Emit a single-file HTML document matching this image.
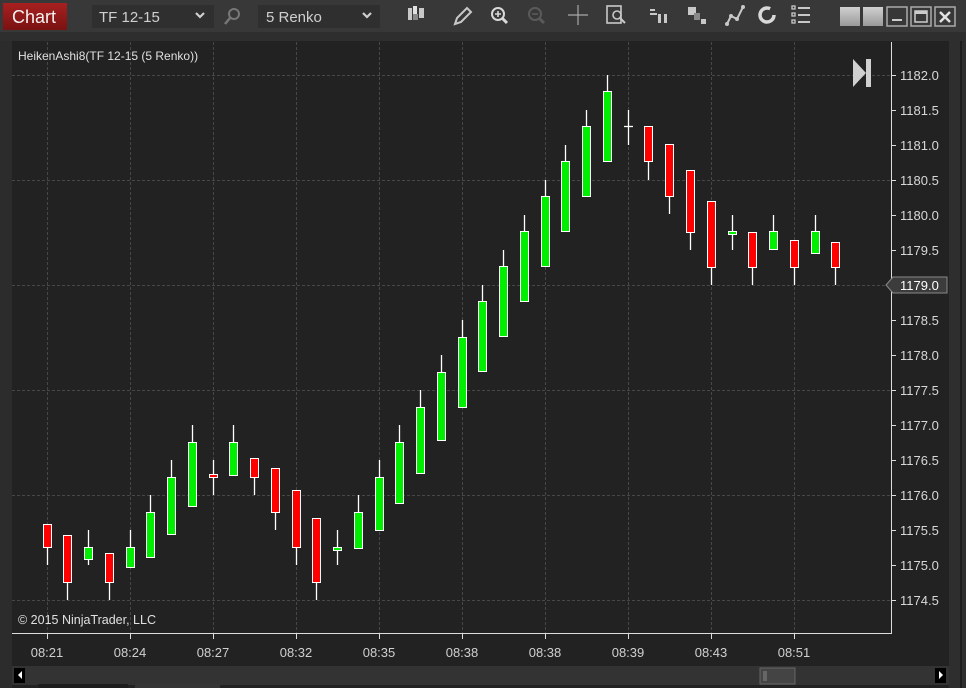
<!DOCTYPE html>
<html><head><meta charset="utf-8"><style>
html,body{margin:0;padding:0;width:966px;height:688px;overflow:hidden;background:#2c2c2c;font-family:"Liberation Sans",sans-serif}
</style></head><body>
<svg width="966" height="688" viewBox="0 0 966 688" xmlns="http://www.w3.org/2000/svg" style="position:absolute;left:0;top:0;font-family:'Liberation Sans',sans-serif">
<defs>
<linearGradient id="rb" x1="0" y1="0" x2="0" y2="1"><stop offset="0" stop-color="#a82020"/><stop offset="1" stop-color="#7a1212"/></linearGradient>
<linearGradient id="gb" x1="0" y1="0" x2="0" y2="1"><stop offset="0" stop-color="#d0d0d0"/><stop offset="1" stop-color="#9a9a9a"/></linearGradient>
</defs>
<rect x="0" y="0" width="966" height="32" fill="#383838"/>
<rect x="0" y="32" width="966" height="9" fill="#2e2e2e"/>
<rect x="3" y="3" width="64" height="27" fill="url(#rb)"/>
<text x="12" y="23" font-size="18" fill="#f2f2f2">Chart</text>
<rect x="92" y="5" width="122" height="23" fill="#2f2f2f"/>
<text x="99" y="22" font-size="15" fill="#cfcfcf">TF 12-15</text>
<path d="M196 13l4 4 4-4" stroke="#cfcfcf" stroke-width="2.2" fill="none"/>
<circle cx="234" cy="14" r="5" stroke="#777" stroke-width="2" fill="none"/><path d="M230 18l-5 6" stroke="#777" stroke-width="2.5"/>
<rect x="258" y="5" width="122" height="23" fill="#2f2f2f"/>
<text x="266" y="22" font-size="15" fill="#cfcfcf">5 Renko</text>
<path d="M363 13l4 4 4-4" stroke="#cfcfcf" stroke-width="2.2" fill="none"/>
<g fill="#c8c8c8" stroke="none">
<rect x="408" y="8" width="4" height="12"/><rect x="413" y="6" width="4" height="14" fill="#e0e0e0"/><rect x="419" y="8" width="5" height="10"/><rect x="413" y="14" width="5" height="6" fill="#888"/>
</g>
<path d="M455 24l2-6 10-10 4 4-10 10z" stroke="#c8c8c8" stroke-width="2" fill="none"/>
<circle cx="498" cy="14" r="6" stroke="#d8d8d8" stroke-width="2" fill="none"/><path d="M495 14h6M498 11v6" stroke="#d8d8d8" stroke-width="1.6"/><path d="M502 18l5 5" stroke="#d8d8d8" stroke-width="3"/>
<circle cx="535" cy="14" r="6" stroke="#5a5a5a" stroke-width="2" fill="none"/><path d="M532 14h6" stroke="#5a5a5a" stroke-width="1.6"/><path d="M539 18l5 5" stroke="#5a5a5a" stroke-width="3"/>
<path d="M568 15h20M578 5v20" stroke="#a8a8a8" stroke-width="1.2"/>
<rect x="607" y="6" width="14" height="17" fill="none" stroke="#c8c8c8" stroke-width="1.6"/><circle cx="617" cy="15" r="4" stroke="#c8c8c8" stroke-width="1.6" fill="none"/><path d="M620 18l5 5" stroke="#c8c8c8" stroke-width="2"/>
<g fill="#c8c8c8"><rect x="650" y="9" width="5" height="2"/><rect x="650" y="13" width="7" height="2"/><rect x="658" y="14" width="3" height="9"/><rect x="664" y="14" width="3" height="9"/></g>
<g fill="#c8c8c8"><rect x="688" y="7" width="8" height="8"/><rect x="694" y="13" width="6" height="7" fill="#888"/><rect x="701" y="19" width="5" height="5"/></g>
<path d="M727 24l4-8 6 3 6-12" stroke="#c8c8c8" stroke-width="2" fill="none"/><g fill="#c8c8c8"><circle cx="727" cy="24" r="2"/><circle cx="731" cy="16" r="2"/><circle cx="737" cy="19" r="2"/><circle cx="743" cy="7" r="2"/></g>
<circle cx="767" cy="15" r="7" stroke="#d8d8d8" stroke-width="3.5" fill="none" stroke-dasharray="36 8"/>
<g fill="none" stroke="#c8c8c8" stroke-width="1.3"><rect x="792" y="6" width="3" height="3"/><rect x="792" y="13" width="3" height="3"/><rect x="792" y="20" width="3" height="3"/></g><g fill="#c8c8c8"><rect x="798" y="7" width="12" height="2"/><rect x="798" y="14" width="12" height="2"/><rect x="798" y="21" width="12" height="2"/></g>
<rect x="840" y="7" width="20" height="19" fill="url(#gb)"/><rect x="863" y="7" width="20" height="19" fill="url(#gb)"/>
<rect x="887" y="7" width="20" height="19" fill="none" stroke="#aaa" stroke-width="1.5"/><rect x="892" y="19" width="10" height="2" fill="#ccc"/>
<rect x="911" y="7" width="20" height="19" fill="none" stroke="#aaa" stroke-width="1.5"/><rect x="915" y="11" width="12" height="11" fill="none" stroke="#ccc" stroke-width="1.5"/><rect x="915" y="11" width="12" height="3" fill="#ccc"/>
<rect x="935" y="7" width="20" height="19" fill="none" stroke="#aaa" stroke-width="1.5"/><path d="M940 12l10 10M950 12l-10 10" stroke="#e0e0e0" stroke-width="2.5"/>
<rect x="12" y="41" width="937" height="647" fill="#222"/>
<rect x="949" y="41" width="17" height="647" fill="#2e2e2e"/>
<rect x="960" y="41" width="2" height="647" fill="#1e1e1e"/>
<g stroke="#474747" stroke-width="1" stroke-dasharray="3 2">
<line x1="12" y1="75.5" x2="891" y2="75.5"/><line x1="12" y1="180.5" x2="891" y2="180.5"/><line x1="12" y1="285.5" x2="891" y2="285.5"/><line x1="12" y1="390.5" x2="891" y2="390.5"/><line x1="12" y1="495.5" x2="891" y2="495.5"/><line x1="12" y1="600.5" x2="891" y2="600.5"/>
<line x1="47.5" y1="42" x2="47.5" y2="633"/><line x1="130.5" y1="42" x2="130.5" y2="633"/><line x1="213.5" y1="42" x2="213.5" y2="633"/><line x1="296.5" y1="42" x2="296.5" y2="633"/><line x1="379.5" y1="42" x2="379.5" y2="633"/><line x1="462.5" y1="42" x2="462.5" y2="633"/><line x1="545.5" y1="42" x2="545.5" y2="633"/><line x1="628.5" y1="42" x2="628.5" y2="633"/><line x1="711.5" y1="42" x2="711.5" y2="633"/><line x1="794.5" y1="42" x2="794.5" y2="633"/>
</g>
<line x1="891.5" y1="42" x2="891.5" y2="634" stroke="#ddd"/>
<line x1="12" y1="633.5" x2="892" y2="633.5" stroke="#ddd"/>
<g stroke="#ddd"><line x1="891" y1="75.5" x2="896" y2="75.5"/><line x1="891" y1="110.5" x2="896" y2="110.5"/><line x1="891" y1="145.5" x2="896" y2="145.5"/><line x1="891" y1="180.5" x2="896" y2="180.5"/><line x1="891" y1="215.5" x2="896" y2="215.5"/><line x1="891" y1="250.5" x2="896" y2="250.5"/><line x1="891" y1="320.5" x2="896" y2="320.5"/><line x1="891" y1="355.5" x2="896" y2="355.5"/><line x1="891" y1="390.5" x2="896" y2="390.5"/><line x1="891" y1="425.5" x2="896" y2="425.5"/><line x1="891" y1="460.5" x2="896" y2="460.5"/><line x1="891" y1="495.5" x2="896" y2="495.5"/><line x1="891" y1="530.5" x2="896" y2="530.5"/><line x1="891" y1="565.5" x2="896" y2="565.5"/><line x1="891" y1="600.5" x2="896" y2="600.5"/>
<line x1="47.5" y1="633" x2="47.5" y2="639"/><line x1="130.5" y1="633" x2="130.5" y2="639"/><line x1="213.5" y1="633" x2="213.5" y2="639"/><line x1="296.5" y1="633" x2="296.5" y2="639"/><line x1="379.5" y1="633" x2="379.5" y2="639"/><line x1="462.5" y1="633" x2="462.5" y2="639"/><line x1="545.5" y1="633" x2="545.5" y2="639"/><line x1="628.5" y1="633" x2="628.5" y2="639"/><line x1="711.5" y1="633" x2="711.5" y2="639"/><line x1="794.5" y1="633" x2="794.5" y2="639"/></g>
<g font-size="13" fill="#d8d8d8">
<text x="900" y="80">1182.0</text><text x="900" y="115">1181.5</text><text x="900" y="150">1181.0</text><text x="900" y="185">1180.5</text><text x="900" y="220">1180.0</text><text x="900" y="255">1179.5</text><text x="900" y="325">1178.5</text><text x="900" y="360">1178.0</text><text x="900" y="395">1177.5</text><text x="900" y="430">1177.0</text><text x="900" y="465">1176.5</text><text x="900" y="500">1176.0</text><text x="900" y="535">1175.5</text><text x="900" y="570">1175.0</text><text x="900" y="605">1174.5</text>
</g>
<path d="M886 285l7-8h54v16h-54z" fill="#3c3c3c" stroke="#888"/>
<text x="900" y="290" font-size="13" fill="#fff">1179.0</text>
<g font-size="13" fill="#d0d0d0" text-anchor="middle">
<text x="47" y="657">08:21</text><text x="130" y="657">08:24</text><text x="213" y="657">08:27</text><text x="296" y="657">08:32</text><text x="379" y="657">08:35</text><text x="462" y="657">08:38</text><text x="545" y="657">08:38</text><text x="628" y="657">08:39</text><text x="711" y="657">08:43</text><text x="794" y="657">08:51</text>
</g>
<text x="18" y="60" font-size="12" fill="#e0e0e0">HeikenAshi8(TF 12-15 (5 Renko))</text>
<text x="18" y="624" font-size="12.5" fill="#e0e0e0">© 2015 NinjaTrader, LLC</text>
<path d="M853 59l13 14-13 14z" fill="#d0d0d0"/><rect x="866" y="59" width="5" height="28" fill="#d0d0d0"/>
<g stroke="#fff" stroke-width="1">
<g stroke-width="1.3">
<line x1="47.5" y1="547" x2="47.5" y2="565"/>
<line x1="67.5" y1="582" x2="67.5" y2="600"/>
<line x1="88.5" y1="530" x2="88.5" y2="565"/>
<line x1="109.5" y1="582" x2="109.5" y2="600"/>
<line x1="130.5" y1="530" x2="130.5" y2="547"/>
<line x1="150.5" y1="495" x2="150.5" y2="512"/>
<line x1="171.5" y1="460" x2="171.5" y2="477"/>
<line x1="192.5" y1="425" x2="192.5" y2="442"/>
<line x1="213.5" y1="460" x2="213.5" y2="495"/>
<line x1="233.5" y1="425" x2="233.5" y2="442"/>
<line x1="254.5" y1="477" x2="254.5" y2="495"/>
<line x1="275.5" y1="512" x2="275.5" y2="530"/>
<line x1="296.5" y1="547" x2="296.5" y2="565"/>
<line x1="316.5" y1="582" x2="316.5" y2="600"/>
<line x1="337.5" y1="530" x2="337.5" y2="565"/>
<line x1="358.5" y1="495" x2="358.5" y2="512"/>
<line x1="379.5" y1="460" x2="379.5" y2="477"/>
<line x1="399.5" y1="425" x2="399.5" y2="442"/>
<line x1="420.5" y1="390" x2="420.5" y2="407"/>
<line x1="441.5" y1="355" x2="441.5" y2="372"/>
<line x1="462.5" y1="320" x2="462.5" y2="337"/>
<line x1="482.5" y1="285" x2="482.5" y2="301"/>
<line x1="503.5" y1="250" x2="503.5" y2="266"/>
<line x1="524.5" y1="215" x2="524.5" y2="231"/>
<line x1="545.5" y1="180" x2="545.5" y2="196"/>
<line x1="565.5" y1="145" x2="565.5" y2="161"/>
<line x1="586.5" y1="110" x2="586.5" y2="126"/>
<line x1="607.5" y1="75" x2="607.5" y2="91"/>
<line x1="628.5" y1="110" x2="628.5" y2="145"/><line x1="624" y1="126.5" x2="633" y2="126.5"/>
<line x1="648.5" y1="161" x2="648.5" y2="180"/>
<line x1="669.5" y1="196" x2="669.5" y2="214"/>
<line x1="690.5" y1="232" x2="690.5" y2="250"/>
<line x1="711.5" y1="267" x2="711.5" y2="285"/>
<line x1="732.5" y1="215" x2="732.5" y2="250"/>
<line x1="752.5" y1="267" x2="752.5" y2="285"/>
<line x1="773.5" y1="215" x2="773.5" y2="231"/>
<line x1="794.5" y1="267" x2="794.5" y2="285"/>
<line x1="815.5" y1="215" x2="815.5" y2="231"/>
<line x1="835.5" y1="267" x2="835.5" y2="285"/>
</g>
<g fill="#ff0000">
<rect x="43.5" y="524.5" width="8" height="23"/>
<rect x="63.5" y="535.5" width="8" height="47"/>
<rect x="105.5" y="553.5" width="8" height="29"/>
<rect x="209.5" y="474.5" width="8" height="3"/>
<rect x="250.5" y="458.5" width="8" height="19"/>
<rect x="271.5" y="468.5" width="8" height="44"/>
<rect x="292.5" y="490.5" width="8" height="57"/>
<rect x="312.5" y="518.5" width="8" height="64"/>
<rect x="644.5" y="126.5" width="8" height="35"/>
<rect x="665.5" y="144.5" width="8" height="52"/>
<rect x="686.5" y="170.5" width="8" height="62"/>
<rect x="707.5" y="201.5" width="8" height="66"/>
<rect x="748.5" y="232.5" width="8" height="35"/>
<rect x="790.5" y="240.5" width="8" height="27"/>
<rect x="831.5" y="242.5" width="8" height="25"/>
</g>
<g fill="#00ee00">
<rect x="84.5" y="547.5" width="8" height="12"/>
<rect x="126.5" y="547.5" width="8" height="20"/>
<rect x="146.5" y="512.5" width="8" height="45"/>
<rect x="167.5" y="477.5" width="8" height="57"/>
<rect x="188.5" y="442.5" width="8" height="64"/>
<rect x="229.5" y="442.5" width="8" height="33"/>
<rect x="333.5" y="547.5" width="8" height="3"/>
<rect x="354.5" y="512.5" width="8" height="36"/>
<rect x="375.5" y="477.5" width="8" height="53"/>
<rect x="395.5" y="442.5" width="8" height="61"/>
<rect x="416.5" y="407.5" width="8" height="66"/>
<rect x="437.5" y="372.5" width="8" height="68"/>
<rect x="458.5" y="337.5" width="8" height="70"/>
<rect x="478.5" y="301.5" width="8" height="70"/>
<rect x="499.5" y="266.5" width="8" height="70"/>
<rect x="520.5" y="231.5" width="8" height="70"/>
<rect x="541.5" y="196.5" width="8" height="70"/>
<rect x="561.5" y="161.5" width="8" height="70"/>
<rect x="582.5" y="126.5" width="8" height="70"/>
<rect x="603.5" y="91.5" width="8" height="70"/>
<rect x="728.5" y="231.5" width="8" height="3"/>
<rect x="769.5" y="231.5" width="8" height="18"/>
<rect x="811.5" y="231.5" width="8" height="22"/>
</g>
</g>
<rect x="12" y="666" width="937" height="19" fill="#333"/>
<rect x="14" y="668" width="11" height="15" fill="#000"/><path d="M22 671l-4 4 4 4z" fill="#fff"/>
<rect x="935" y="668" width="11" height="15" fill="#000"/><path d="M939 671l4 4-4 4z" fill="#fff"/>
<rect x="760" y="668" width="35" height="16" fill="#444" stroke="#666"/>
<path d="M764 671v10M766 671v10" stroke="#888"/>
<rect x="38" y="684" width="90" height="4" fill="#1d1d1d"/><rect x="135" y="684" width="85" height="4" fill="#353535"/>
</svg>
</body></html>
